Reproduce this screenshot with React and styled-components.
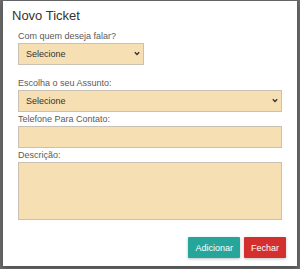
import React from "react";
import styled, { createGlobalStyle } from "styled-components";

const GlobalStyle = createGlobalStyle`
  html, body {
    margin: 0;
    padding: 0;
    background: #6b6b6b;
  }
  * {
    box-sizing: border-box;
  }
`;

const Overlay = styled.div`
  width: 300px;
  height: 269px;
  background: #6b6b6b;
  padding: 1px 3px 3px 3px;
  font-family: "Liberation Sans", Arial, sans-serif;
`;

const Modal = styled.div`
  width: 294px;
  height: 265px;
  background: #ffffff;
  box-shadow: 0 2px 6px rgba(0, 0, 0, 0.3);
  display: flex;
  flex-direction: column;
  padding: 6px 11px 8px 9px;
`;

const Title = styled.h4`
  margin: 0;
  font-size: 13px;
  line-height: 18px;
  font-weight: normal;
  color: #333333;
`;

const Form = styled.div`
  display: flex;
  flex-direction: column;
  padding: 5px 4px 0 6px;
  flex: 1;
`;

const Field = styled.div`
  display: flex;
  flex-direction: column;
  align-items: flex-start;
  margin-bottom: ${(p) => p.$gap || 1}px;
`;

const Label = styled.label`
  font-size: 9px;
  line-height: 13px;
  color: #5a5a5a;
`;

const SelectWrap = styled.div`
  position: relative;
  width: ${(p) => (p.$short ? "126px" : "100%")};
`;

const Select = styled.select`
  appearance: none;
  width: 100%;
  height: 22px;
  background: #f6dfb3;
  border: 1px solid #c9c2b4;
  border-radius: 0;
  padding: 0 0 0 7px;
  font-family: "Liberation Sans", Arial, sans-serif;
  font-size: 9px;
  color: #333333;
  outline: none;
`;

const Chevron = styled.svg`
  position: absolute;
  right: 4px;
  top: 8px;
  pointer-events: none;
`;

const Input = styled.input`
  width: 100%;
  height: 22px;
  background: #f6dfb3;
  border: 1px solid #c9c2b4;
  border-radius: 0;
  outline: none;
`;

const TextArea = styled.textarea`
  width: 100%;
  height: 58px;
  background: #f6dfb3;
  border: 1px solid #c9c2b4;
  border-radius: 0;
  resize: none;
  outline: none;
`;

const Footer = styled.div`
  display: flex;
  justify-content: flex-end;
  gap: 4px;
`;

const Button = styled.button`
  height: 21px;
  padding: 0 7px;
  border: none;
  border-radius: 1px;
  background: ${(p) => p.$color};
  color: #ffffff;
  font-family: "Liberation Sans", Arial, sans-serif;
  font-size: 9px;
  box-shadow: 0 1px 3px rgba(0, 0, 0, 0.25);
  cursor: pointer;
`;

const SelectBox = ({ short }) => (
  <SelectWrap $short={short}>
    <Select defaultValue="">
      <option value="">Selecione</option>
    </Select>
    <Chevron width="6" height="5" viewBox="0 0 6 5">
      <path d="M0.8 1.2 L3 3.4 L5.2 1.2" fill="none" stroke="#333" strokeWidth="1.4" />
    </Chevron>
  </SelectWrap>
);

export default function App() {
  return (
    <>
      <GlobalStyle />
      <Overlay>
        <Modal>
          <Title>Novo Ticket</Title>
          <Form>
            <Field $gap={12}>
              <Label>Com quem deseja falar?</Label>
              <SelectBox short />
            </Field>
            <Field>
              <Label>Escolha o seu Assunto:</Label>
              <SelectBox />
            </Field>
            <Field>
              <Label>Telefone Para Contato:</Label>
              <Input />
            </Field>
            <Field>
              <Label>Descrição:</Label>
              <TextArea />
            </Field>
          </Form>
          <Footer>
            <Button $color="#26a69a">Adicionar</Button>
            <Button $color="#d32f2f">Fechar</Button>
          </Footer>
        </Modal>
      </Overlay>
    </>
  );
}
